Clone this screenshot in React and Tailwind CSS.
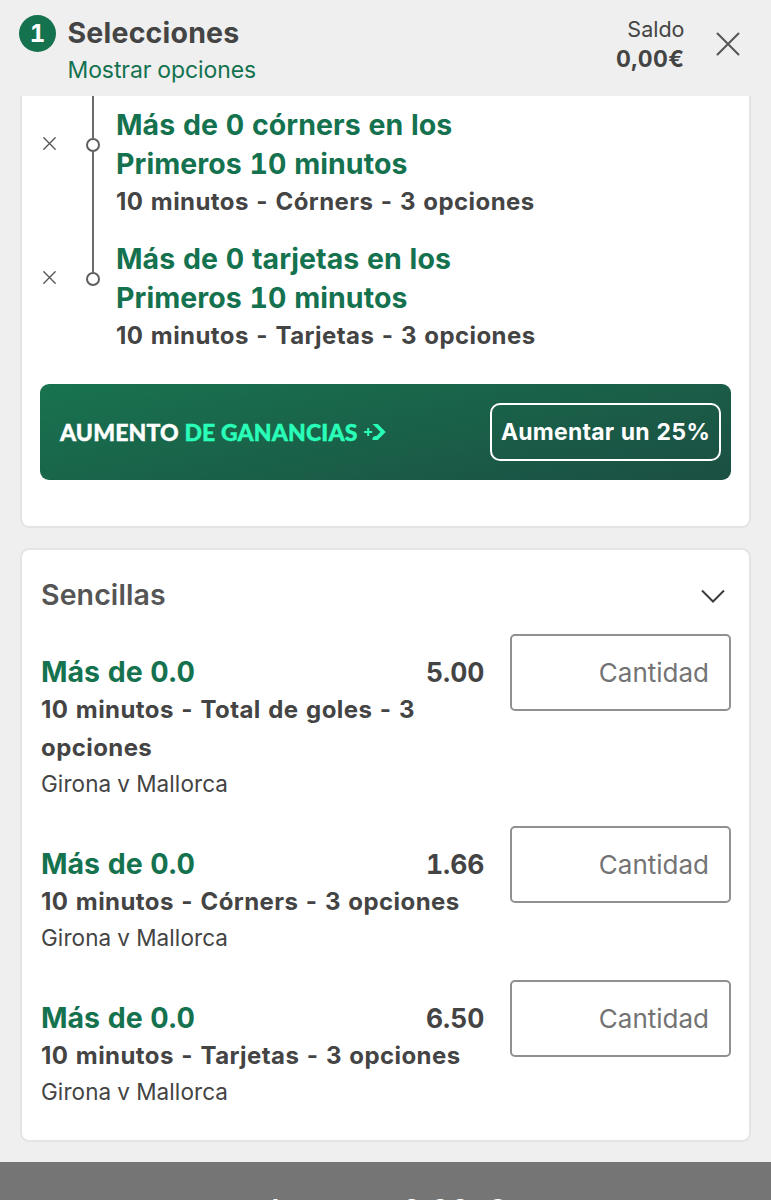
const selections = [
  { title: ['Más de 0 córners en los', 'Primeros 10 minutos'], detail: '10 minutos - Córners - 3 opciones' },
  { title: ['Más de 0 tarjetas en los', 'Primeros 10 minutos'], detail: '10 minutos - Tarjetas - 3 opciones' },
];

const singles = [
  { odds: '5.00', detail: ['10 minutos - Total de goles - 3', 'opciones'], height: 'h-[192px]' },
  { odds: '1.66', detail: ['10 minutos - Córners - 3 opciones'], height: 'h-[153.5px]' },
  { odds: '6.50', detail: ['10 minutos - Tarjetas - 3 opciones'], height: 'h-[161px]' },
];

function Cross({ className, weight }) {
  return (
    <svg viewBox="0 0 24 24" className={className} fill="none" stroke="currentColor" strokeWidth={weight} strokeLinecap="round">
      <path d="M1.5 1.5 22.5 22.5M22.5 1.5 1.5 22.5" />
    </svg>
  );
}

function Header() {
  return (
    <header className="flex h-[96px] shrink-0 items-start">
      <div className="mt-[15px] ml-[19px] flex size-[37px] items-center justify-center rounded-full bg-[#14724f] text-[24px] font-bold text-white">1</div>
      <div className="ml-[11.5px] pt-[14px]">
        <h1 className="text-[28.5px] leading-[38px] font-bold tracking-[0.2px]">Selecciones</h1>
        <button className="block text-[23px] leading-[36px] tracking-[-0.1px] text-[#14724f]">Mostrar opciones</button>
      </div>
      <div className="mr-[31.5px] ml-auto pt-[14px] text-right leading-[30px]">
        <div className="text-[21.5px]">Saldo</div>
        <div className="text-[23px] font-bold tracking-[0.4px]">0,00€</div>
      </div>
      <button aria-label="Cerrar" className="mt-[32px] mr-[31px]">
        <Cross className="size-[24px] text-[#545454]" weight={2} />
      </button>
    </header>
  );
}

function Selection({ item, last }) {
  return (
    <li className="flex h-[134px]">
      <div className="w-[64px] shrink-0 pt-[41px] pl-[21px]">
        <Cross className="size-[13px] text-[#545454]" weight={2.4} />
      </div>
      <div className="flex w-[14px] shrink-0 flex-col items-center">
        <div className="h-[42px] w-[2px] shrink-0 bg-[#6b6b6b]" />
        <div className="size-[14px] shrink-0 rounded-full border-2 border-[#5e5e5e] bg-white" />
        {!last && <div className="w-[2px] grow bg-[#6b6b6b]" />}
      </div>
      <div className="ml-[16px] pt-[10px] whitespace-nowrap">
        {item.title.map((line) => (
          <div key={line} className="text-[28.5px] leading-[38.5px] font-bold tracking-[0.06px] text-[#14724f]">{line}</div>
        ))}
        <div className="text-[24px] leading-[38px] font-bold tracking-[0.42px] [font-variant-numeric:normal] [word-spacing:1.4px]">{item.detail}</div>
      </div>
    </li>
  );
}

function Single({ item }) {
  return (
    <li className={`flex ${item.height}`}>
      <div className="w-[340px] shrink-0 pt-[19px]">
        <div className="text-[28.5px] leading-[38px] font-bold text-[#14724f]">Más de 0.0</div>
        {item.detail.map((line) => (
          <div key={line} className="text-[24px] leading-[38px] font-bold tracking-[0.42px] whitespace-nowrap [font-variant-numeric:normal] [word-spacing:1.4px]">{line}</div>
        ))}
        <div className="text-[22.5px] leading-[33px] tracking-[0.08px]">Girona v Mallorca</div>
      </div>
      <div className="grow pt-[19px] text-right text-[26.5px] leading-[39px] font-bold">{item.odds}</div>
      <div className="ml-[25.5px] flex h-[77px] w-[221px] shrink-0 items-center justify-end rounded-[5px] border-2 border-[#909090] pr-[20px] text-[26px] text-[#737373]">Cantidad</div>
    </li>
  );
}

function Boost() {
  return (
    <div className="mx-[18px] mt-[20px] flex h-[96px] shrink-0 items-center rounded-[9px] bg-linear-[167deg,#18734f,#1b4f43] pr-[10px] pl-[20px]">
      <div className="font-['Lato',sans-serif] text-[23px] font-black tracking-[0.14px] whitespace-nowrap text-white [-webkit-text-stroke:0.4px]">
        AUMENTO <span className="text-[#29ffb8]">DE GANANCIAS</span>
      </div>
      <svg viewBox="0 0 22 16" className="ml-[6px] h-[16px] w-[22px]" fill="#29ffb8">
        <path d="M3.2 4h2v3h3v2h-3v3h-2V9h-3V7h3z" />
        <path d="M8.5 0h5.2l8 8-8 8H8.5v-2l2-2h2l4-4-4.2-4.2z" />
      </svg>
      <button className="ml-auto flex h-[58px] w-[231px] items-center justify-center rounded-[10px] border-2 border-white text-[23px] font-bold tracking-[0.22px] whitespace-nowrap text-white">
        Aumentar un 25%
      </button>
    </div>
  );
}

export default function App() {
  return (
    <div className="flex h-[1200px] w-[771px] flex-col overflow-hidden bg-[#efefef] font-['Inter',sans-serif] text-[#444444] tabular-nums">
      <Header />
      <section className="mx-[20px] flex h-[432px] shrink-0 flex-col rounded-b-[9px] border-x-2 border-b-2 border-[#e4e4e4] bg-white">
        <ul className="shrink-0">
          <Selection item={selections[0]} />
          <Selection item={selections[1]} last />
        </ul>
        <Boost />
      </section>
      <section className="mx-[20px] mt-[20px] h-[594px] shrink-0 rounded-[9px] border-2 border-[#e4e4e4] bg-white pr-[18px] pl-[19px]">
        <div className="flex h-[84px] items-center justify-between pt-[7px]">
          <h2 className="text-[28.5px] font-semibold tracking-[0.1px] text-[#555]">Sencillas</h2>
          <svg viewBox="0 0 24 14" className="mr-[6px] h-[14px] w-[24px]" fill="none" stroke="#3c3c3c" strokeWidth="2">
            <path d="m1 1.5 11 11 11-11" />
          </svg>
        </div>
        <ul>{singles.map((s) => <Single key={s.odds} item={s} />)}</ul>
      </section>
      <footer className="mt-auto flex h-[38px] shrink-0 justify-center overflow-hidden bg-[#757575] pt-[30px] pl-[6px] text-[30px] leading-[36px] font-semibold tracking-[0.5px] whitespace-nowrap text-white [word-spacing:6px]">
        Importe 0,00 €
      </footer>
    </div>
  );
}
